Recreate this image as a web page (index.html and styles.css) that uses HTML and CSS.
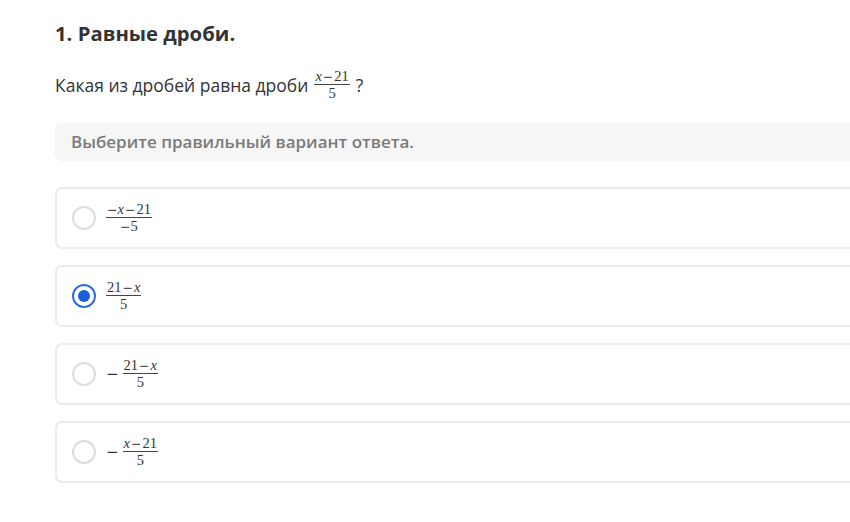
FILE: index.html
```html
<!DOCTYPE html>
<html lang="ru">
<head>
    <meta charset="UTF-8">
    <meta name="viewport" content="width=device-width, initial-scale=1.0">
    <title>Равные дроби</title>
    <link rel="stylesheet" href="styles.css">
</head>
<body>
<div class="task">
    <h2 class="task_title">1. Равные дроби.</h2>
    <p class="task_question">Какая из дробей равна дроби
        <span class="frac"><span class="num"><i>x</i><span class="op">−</span>21</span><span class="den">5</span></span> ?</p>
    <div class="hint">Выберите правильный вариант ответа.</div>

    <div class="options">
        <label class="option">
            <span class="radio"></span>
            <span class="math"><span class="frac"><span class="num"><span class="sign">−</span><i>x</i><span class="op">−</span>21</span><span class="den"><span class="sign">−</span>5</span></span></span>
        </label>
        <label class="option">
            <span class="radio checked"></span>
            <span class="math"><span class="frac"><span class="num">21<span class="op">−</span><i>x</i></span><span class="den">5</span></span></span>
        </label>
        <label class="option">
            <span class="radio"></span>
            <span class="math"><span class="minus">−</span><span class="frac"><span class="num">21<span class="op">−</span><i>x</i></span><span class="den">5</span></span></span>
        </label>
        <label class="option">
            <span class="radio"></span>
            <span class="math"><span class="minus">−</span><span class="frac"><span class="num"><i>x</i><span class="op">−</span>21</span><span class="den">5</span></span></span>
        </label>
    </div>
</div>
</body>
</html>
```

FILE: styles.css
```css
body {
    margin: 0;
    background: #fff;
    font-family: "Open Sans", Lato, sans-serif;
    color: #333;
    overflow: hidden;
}
.task {
    width: 840px;
    padding: 18px 0 0 55px;
}
.task_title {
    margin: 0;
    font-size: 20.3px;
    font-weight: 700;
    line-height: 30px;
    color: #333;
}
.task_question {
    margin: 22px 0 0 0;
    font-size: 17.5px;
    line-height: 30px;
    display: flex;
    align-items: center;
    gap: 6px;
}
.hint {
    margin-top: 23px;
    height: 38px;
    line-height: 38px;
    padding-left: 16px;
    background: #f6f6f6;
    border-radius: 6px 0 0 6px;
    color: #7a7a7a;
    font-weight: 600;
    font-size: 17px;
}
.options {
    margin-top: 26px;
    display: flex;
    flex-direction: column;
    gap: 16px;
}
.option {
    height: 58px;
    border: 2px solid #ebebeb;
    border-radius: 7px;
    display: flex;
    align-items: center;
    padding-left: 15px;
    gap: 10px;
}
.radio {
    width: 20px;
    height: 20px;
    border: 2px solid #dcdcdc;
    border-radius: 50%;
    background: #fff;
    display: flex;
    align-items: center;
    justify-content: center;
}
.radio.checked {
    border-color: #2f6fd8;
}
.radio.checked::after {
    content: "";
    width: 12px;
    height: 12px;
    border-radius: 50%;
    background: #1b5fd9;
}
.math {
    display: flex;
    align-items: center;
    gap: 4px;
    font-family: "Liberation Serif", "DejaVu Serif", serif;
    color: #333;
}
.minus {
    font-family: "DejaVu Serif", serif;
    font-size: 15px;
}
.frac {
    display: inline-flex;
    flex-direction: column;
    align-items: center;
    font-family: "Liberation Serif", "DejaVu Serif", serif;
    font-size: 14.5px;
    line-height: 13px;
    color: #333;
}
.frac .num {
    padding: 0 1px 1px;
    border-bottom: 1px solid #444;
}
.frac .den {
    padding-top: 2px;
}
.frac .op {
    font-family: "DejaVu Serif", serif;
    font-size: 12.5px;
    margin: 0 1px;
}
.frac .sign {
    font-family: "DejaVu Serif", serif;
    font-size: 12.5px;
}
.frac i {
    font-style: italic;
}
```
